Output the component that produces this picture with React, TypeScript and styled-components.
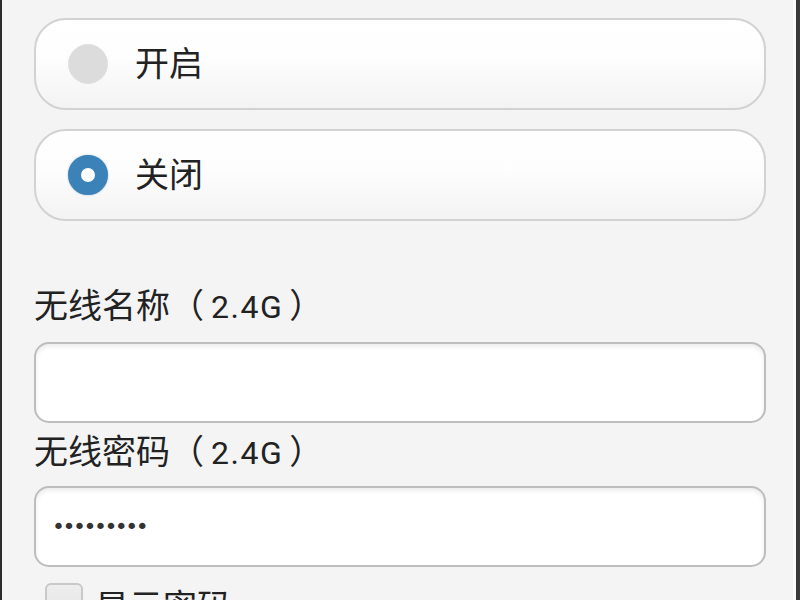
import React from 'react';

import styled, { createGlobalStyle } from 'styled-components';

const GlobalStyle = createGlobalStyle`
  html, body {
    margin: 0;
    padding: 0;
    height: 100%;
    overflow: hidden;
    background: #f4f4f5;
  }
  #root {
    height: 100%;
  }
`;

const fontStack = `Roboto, "Noto Sans CJK SC", sans-serif`;

const Page = styled.div`
  box-sizing: border-box;
  height: 600px;
  overflow: hidden;
  padding: 18px 30px 0 32px;
  display: flex;
  flex-direction: column;
  background: #f4f4f5;
  border-left: 2px solid #2c2c2c;
  border-right: 4px solid #3a3a3a;
  box-shadow: inset -3px 0 0 #fbfbfb;
  font-family: ${fontStack};
  color: #222;
  & > * {
    flex: none;
  }
`;

const OptionList = styled.div`
  display: flex;
  flex-direction: column;
  gap: 19px;
`;

const OptionButton = styled.div`
  box-sizing: border-box;
  height: 92px;
  display: flex;
  align-items: center;
  gap: 27px;
  padding-left: 32px;
  border: 2px solid #d2d2d2;
  border-radius: 32px;
  background: linear-gradient(180deg, #ffffff 0%, #fdfdfd 45%, #f3f3f4 100%);
`;

const Radio = styled.span<{ $checked?: boolean }>`
  box-sizing: border-box;
  width: 40px;
  height: 40px;
  border-radius: 50%;
  flex: none;
  background: ${(p) => (p.$checked ? '#ffffff' : '#dcdcdc')};
  border: ${(p) => (p.$checked ? '13px solid #3a82b8' : '1px solid #e0e0e0')};
  box-shadow: ${(p) => (p.$checked ? '0 0 2px rgba(58, 130, 184, 0.5)' : 'none')};
`;

const OptionText = styled.span`
  font-size: 34px;
  line-height: 40px;
`;

const FieldLabel = styled.div<{ $top: number; $bottom: number }>`
  font-size: 34px;
  line-height: 40px;
  margin-top: ${(p) => p.$top}px;
  margin-bottom: ${(p) => p.$bottom}px;
`;

const Band = styled.span`
  font-size: 32px;
  letter-spacing: 1.5px;
  padding: 0 6px 0 7px;
`;

const TextInput = styled.input`
  box-sizing: border-box;
  width: 100%;
  height: 81px;
  padding: 0 16px;
  border: 2px solid #bdbdbd;
  border-radius: 15px;
  background: #ffffff;
  box-shadow: inset 0 3px 4px rgba(0, 0, 0, 0.07);
  font-family: "DejaVu Sans", sans-serif;
  font-size: 22px;
  letter-spacing: -2.5px;
  color: #333;
  outline: none;
`;

const CheckRow = styled.label`
  display: flex;
  align-items: flex-start;
  gap: 12px;
  margin-top: 16px;
  padding-left: 11px;
`;

const CheckBox = styled.span`
  box-sizing: border-box;
  width: 38px;
  height: 38px;
  flex: none;
  border-radius: 6px;
  border: 2px solid #c9c9c9;
  background: linear-gradient(180deg, #eeeeee 0%, #e2e2e2 100%);
`;

const CheckText = styled.span`
  font-size: 34px;
  line-height: 40px;
  margin-top: 4px;
`;

const App: React.FunctionComponent = () => (
  <>
    <GlobalStyle />
    <Page>
      <OptionList>
        <OptionButton>
          <Radio />
          <OptionText>开启</OptionText>
        </OptionButton>
        <OptionButton>
          <Radio $checked />
          <OptionText>关闭</OptionText>
        </OptionButton>
      </OptionList>
      <FieldLabel $top={65} $bottom={15}>
        无线名称（<Band>2.4G</Band>）
      </FieldLabel>
      <TextInput type="text" defaultValue="" />
      <FieldLabel $top={9} $bottom={13}>
        无线密码（<Band>2.4G</Band>）
      </FieldLabel>
      <TextInput type="password" defaultValue="123456789" />
      <CheckRow>
        <CheckBox />
        <CheckText>显示密码</CheckText>
      </CheckRow>
    </Page>
  </>
);

export default App;
